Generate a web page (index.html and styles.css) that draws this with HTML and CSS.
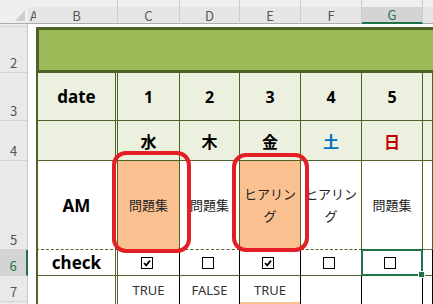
FILE: index.html
```html
<!DOCTYPE html>
<html lang="ja">
<head>
<meta charset="utf-8">
<link rel="stylesheet" href="styles.css">
</head>
<body>
<div class="sheet">
  <!-- column headers -->
  <div class="c ch corner"><svg width="28" height="24" viewBox="0 0 28 24"><polygon points="25,10 25,21 15,21" fill="#cfcfcf"/></svg></div>
  <div class="c ch cha">A</div>
  <div class="c ch">B</div>
  <div class="c ch">C</div>
  <div class="c ch">D</div>
  <div class="c ch">E</div>
  <div class="c ch">F</div>
  <div class="c ch ch-sel">G</div>
  <div class="c ch chh"></div>

  <!-- row 1 -->
  <div class="c rh"></div>
  <div class="c ca"></div>
  <div class="c r1"></div>

  <!-- row 2 -->
  <div class="c rh">2</div>
  <div class="c ca"></div>
  <div class="c title"></div>

  <!-- row 3 -->
  <div class="c rh">3</div>
  <div class="c ca"></div>
  <div class="c t lg colb head">date</div>
  <div class="c t lg head">1</div>
  <div class="c t lg head">2</div>
  <div class="c t lg head">3</div>
  <div class="c t lg head">4</div>
  <div class="c t lg head">5</div>
  <div class="c t lg head"></div>

  <!-- row 4 -->
  <div class="c rh">4</div>
  <div class="c ca"></div>
  <div class="c t lg colb head"></div>
  <div class="c t lg head">水</div>
  <div class="c t lg head">木</div>
  <div class="c t lg head">金</div>
  <div class="c t lg head sat">土</div>
  <div class="c t lg head sun">日</div>
  <div class="c t lg head"></div>

  <!-- row 5 -->
  <div class="c rh">5</div>
  <div class="c ca"></div>
  <div class="c t r5 colb head">AM</div>
  <div class="c t r5 task orange">問題集</div>
  <div class="c t r5 task">問題集</div>
  <div class="c t r5 task orange">ヒアリング</div>
  <div class="c t r5 task">ヒアリング</div>
  <div class="c t r5 task">問題集</div>
  <div class="c t r5 task"></div>

  <!-- row 6 -->
  <div class="c rh rh-sel">6</div>
  <div class="c ca"></div>
  <div class="c t colb head">check</div>
  <div class="c t blk"><span class="cb"><svg width="10" height="10" viewBox="0 0 10 10"><path d="M2 5 L4.2 7.3 L8 2.6" fill="none" stroke="#000" stroke-width="1.8"/></svg></span></div>
  <div class="c t blk"><span class="cb"></span></div>
  <div class="c t blk"><span class="cb"><svg width="10" height="10" viewBox="0 0 10 10"><path d="M2 5 L4.2 7.3 L8 2.6" fill="none" stroke="#000" stroke-width="1.8"/></svg></span></div>
  <div class="c t blk"><span class="cb"></span></div>
  <div class="c t blk selcell"><span class="cb"></span><span class="sel"><span class="fh"></span></span></div>
  <div class="c t blk"></div>

  <!-- row 7 -->
  <div class="c rh">7</div>
  <div class="c ca"></div>
  <div class="c t colb nob"></div>
  <div class="c t blk nob val">TRUE</div>
  <div class="c t blk nob val">FALSE</div>
  <div class="c t blk nob val">TRUE</div>
  <div class="c t blk nob"></div>
  <div class="c t blk nob"></div>
  <div class="c t blk nob"></div>

  <!-- row 8 -->
  <div class="c rh"></div>
  <div class="c ca"></div>
  <div class="c t colb nob"></div>
  <div class="c t blk nob"></div>
  <div class="c t blk nob"></div>
  <div class="c t blk nob orange"></div>
  <div class="c t blk nob"></div>
  <div class="c t blk nob"></div>
  <div class="c t blk nob"></div>

  <!-- annotation rings -->
  <div class="ring ring1"></div>
  <div class="ring ring2"></div>
</div>
</body>
</html>
```

FILE: styles.css
```css
html, body {
  margin: 0;
  padding: 0;
  background: #fff;
}

.sheet {
  position: relative;
  display: grid;
  grid-template-columns: 28px 8px 82px 62px 60px 61px 61px 61px 10px;
  grid-template-rows: 24px 3px 46px 48px 40px 89px 26px 26px 2px;
  width: 433px;
  height: 304px;
  overflow: hidden;
  font-family: "Noto Sans", "Noto Sans CJK JP", sans-serif;
}

.c {
  box-sizing: border-box;
  display: flex;
  align-items: center;
  justify-content: center;
  text-align: center;
  min-width: 0;
}

/* column headers */
.ch {
  background: linear-gradient(to bottom, #efefef 7px, #e6e6e6 7px);
  border-bottom: 1px solid #ababab;
  border-right: 1px solid #cdcdcd;
  padding-top: 7px;
  font-family: "Noto Sans CJK JP", sans-serif;
  font-size: 13px;
  color: #555;
  font-weight: 400;
}
.corner {
  padding: 0;
  border-right: none;
  background: #efefef;
}
.cha {
  justify-content: flex-start;
  padding-left: 2px;
  border-right: none;
}
.ch-sel {
  background: linear-gradient(to bottom, #efefef 7px, #d4d4d4 7px);
  border-bottom: 2px solid #217346;
  color: #217346;
}
.chh {
  border-right: none;
}

/* row headers */
.rh {
  background: #e9e9e9;
  border-right: 1px solid #c6c6c6;
  border-bottom: 1px solid #d4d4d4;
  align-items: flex-end;
  padding-bottom: 2px;
  font-family: "Noto Sans CJK JP", sans-serif;
  font-size: 13px;
  line-height: 14px;
  color: #555;
}
.rh-sel {
  background: #d4d4d4;
  border-right: 2px solid #217346;
  color: #217346;
}

.ca {
  background: #fff;
}

.r1 {
  grid-column: 3 / 10;
}

.title {
  grid-column: 3 / 10;
  background: #9bbb59;
  border: 3px solid #4f6228;
  border-right: none;
}

/* table cells */
.t {
  border-right: 1px solid #4f6228;
  border-bottom: 1px solid #4f6228;
  background: #fff;
  overflow: hidden;
}
.lg {
  background: #ebf1de;
}
.colb {
  border-left: 2px solid #4f6228;
  border-right: 3px double #4f6228;
}
.r5 {
  border-bottom: 1px dashed #4f6228;
}
.blk {
  border-right-color: #000;
}
.nob {
  border-bottom: none;
}
.orange {
  background: #fac090;
}

.head {
  font-weight: 700;
  font-size: 16px;
  color: #000;
}
.colb.head {
  font-size: 17px;
}
.sat { color: #0070c0; }
.sun { color: #c00000; }

.task {
  font-family: "Noto Sans CJK JP", sans-serif;
  font-size: 13px;
  line-height: 22px;
  color: #222;
  padding: 0 1px;
}

.val {
  font-size: 13px;
  color: #333;
  padding-top: 1px;
}

.cb {
  box-sizing: border-box;
  width: 12px;
  height: 12px;
  border: 1px solid #000;
  background: #fff;
  margin-right: 4px;
  display: flex;
  align-items: center;
  justify-content: center;
}

.selcell {
  position: relative;
  overflow: visible;
}
.sel {
  position: absolute;
  left: -1px;
  top: -1px;
  right: -1px;
  bottom: -1px;
  border: 2px solid #217346;
}
.fh {
  position: absolute;
  right: -4px;
  bottom: -4px;
  width: 5px;
  height: 5px;
  background: #217346;
  border: 1px solid #fff;
}

.ring {
  position: absolute;
  box-sizing: border-box;
  border: 4px solid #e31e24;
  border-radius: 14px;
}
.ring1 {
  left: 112px;
  top: 151px;
  width: 79px;
  height: 102px;
}
.ring2 {
  left: 232px;
  top: 153px;
  width: 77px;
  height: 99px;
}
```
